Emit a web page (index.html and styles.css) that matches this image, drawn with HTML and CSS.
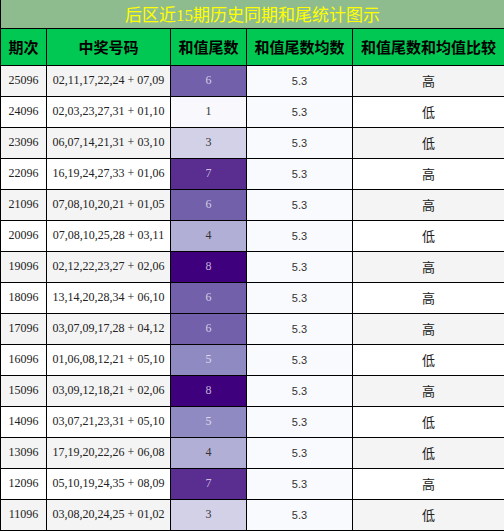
FILE: index.html
```html
<!DOCTYPE html>
<html lang="zh">
<head>
  <meta charset="UTF-8" />
  <title>后区近15期历史同期和尾统计图示</title>
  <link rel="stylesheet" href="styles.css">
</head>
<body>

<table class="stats">
  <colgroup>
    <col class="c-issue">
    <col class="c-balls">
    <col class="c-sum">
    <col class="c-avg">
    <col class="c-cmp">
  </colgroup>
  <thead>
    <tr class="title-row">
      <th colspan="5">后区近15期历史同期和尾统计图示</th>
    </tr>
    <tr class="head-row">
      <th>期次</th>
      <th>中奖号码</th>
      <th>和值尾数</th>
      <th>和值尾数均数</th>
      <th>和值尾数和均值比较</th>
    </tr>
  </thead>
  <tbody id="rows"></tbody>
</table>

<script>
  const draws = [
    ["25096", "02,11,17,22,24 + 07,09", 6, "高"],
    ["24096", "02,03,23,27,31 + 01,10", 1, "低"],
    ["23096", "06,07,14,21,31 + 03,10", 3, "低"],
    ["22096", "16,19,24,27,33 + 01,06", 7, "高"],
    ["21096", "07,08,10,20,21 + 01,05", 6, "高"],
    ["20096", "07,08,10,25,28 + 03,11", 4, "低"],
    ["19096", "02,12,22,23,27 + 02,06", 8, "高"],
    ["18096", "13,14,20,28,34 + 06,10", 6, "高"],
    ["17096", "03,07,09,17,28 + 04,12", 6, "高"],
    ["16096", "01,06,08,12,21 + 05,10", 5, "低"],
    ["15096", "03,09,12,18,21 + 02,06", 8, "高"],
    ["14096", "03,07,21,23,31 + 05,10", 5, "低"],
    ["13096", "17,19,20,22,26 + 06,08", 4, "低"],
    ["12096", "05,10,19,24,35 + 08,09", 7, "高"],
    ["11096", "03,08,20,24,25 + 01,02", 3, "低"]
  ];

  const tbody = document.getElementById("rows");

  draws.forEach(([issue, balls, sum, cmp]) => {
    const tr = document.createElement("tr");
    tr.innerHTML =
      `<td class="issue">${issue}</td>` +
      `<td class="balls">${balls}</td>` +
      `<td class="sum heat-${sum}">${sum}</td>` +
      `<td class="avg">5.3</td>` +
      `<td class="cmp">${cmp}</td>`;
    tbody.appendChild(tr);
  });
</script>

</body>
</html>
```

FILE: styles.css
```css
* {
  box-sizing: border-box;
}

body {
  margin: 0;
  background: #fff;
}

.stats {
  width: 504px;
  border-collapse: collapse;
  table-layout: fixed;
  font-family: "Liberation Serif", "Noto Sans CJK SC", serif;
  color: #222;
}

.c-issue { width: 46px; }
.c-balls { width: 124px; }
.c-sum { width: 76px; }
.c-avg { width: 106px; }
.c-cmp { width: 152px; }

.stats th,
.stats td {
  border: 1px solid #000;
  padding: 0;
  text-align: center;
  white-space: nowrap;
}

.title-row th {
  height: 28px;
  background: #8fbc8f;
  color: #ffff00;
  font-family: "Liberation Serif", "Noto Sans CJK SC", serif;
  font-size: 17px;
  font-weight: normal;
  border-top: none;
}

.head-row th {
  height: 37px;
  background: #00c853;
  color: #000;
  font-family: "Noto Sans CJK SC", sans-serif;
  font-size: 15px;
  font-weight: bold;
}

.stats td {
  height: 31px;
  font-size: 12px;
}

.stats tbody tr {
  background: #fff;
}

.stats tbody tr:nth-child(odd) {
  background: #f4f4f4;
}

.stats td.avg {
  background: #f9fafd;
  font-family: "Liberation Sans", sans-serif;
  font-size: 11px;
  color: #333;
}

.stats td.cmp {
  font-family: "Noto Sans CJK SC", sans-serif;
  font-size: 13px;
  color: #222;
}

/* purple heat scale for the sum tail */
.stats td.heat-1 { background: #f9f8fc; color: #333; }
.stats td.heat-3 { background: #d2d1e7; color: #333; }
.stats td.heat-4 { background: #b1afd5; color: #333; }
.stats td.heat-5 { background: #8f8bc2; color: rgba(255, 255, 255, 0.7); }
.stats td.heat-6 { background: #7260ab; color: rgba(255, 255, 255, 0.7); }
.stats td.heat-7 { background: #5a2d91; color: rgba(255, 255, 255, 0.7); }
.stats td.heat-8 { background: #3f007d; color: rgba(255, 255, 255, 0.7); }
```
